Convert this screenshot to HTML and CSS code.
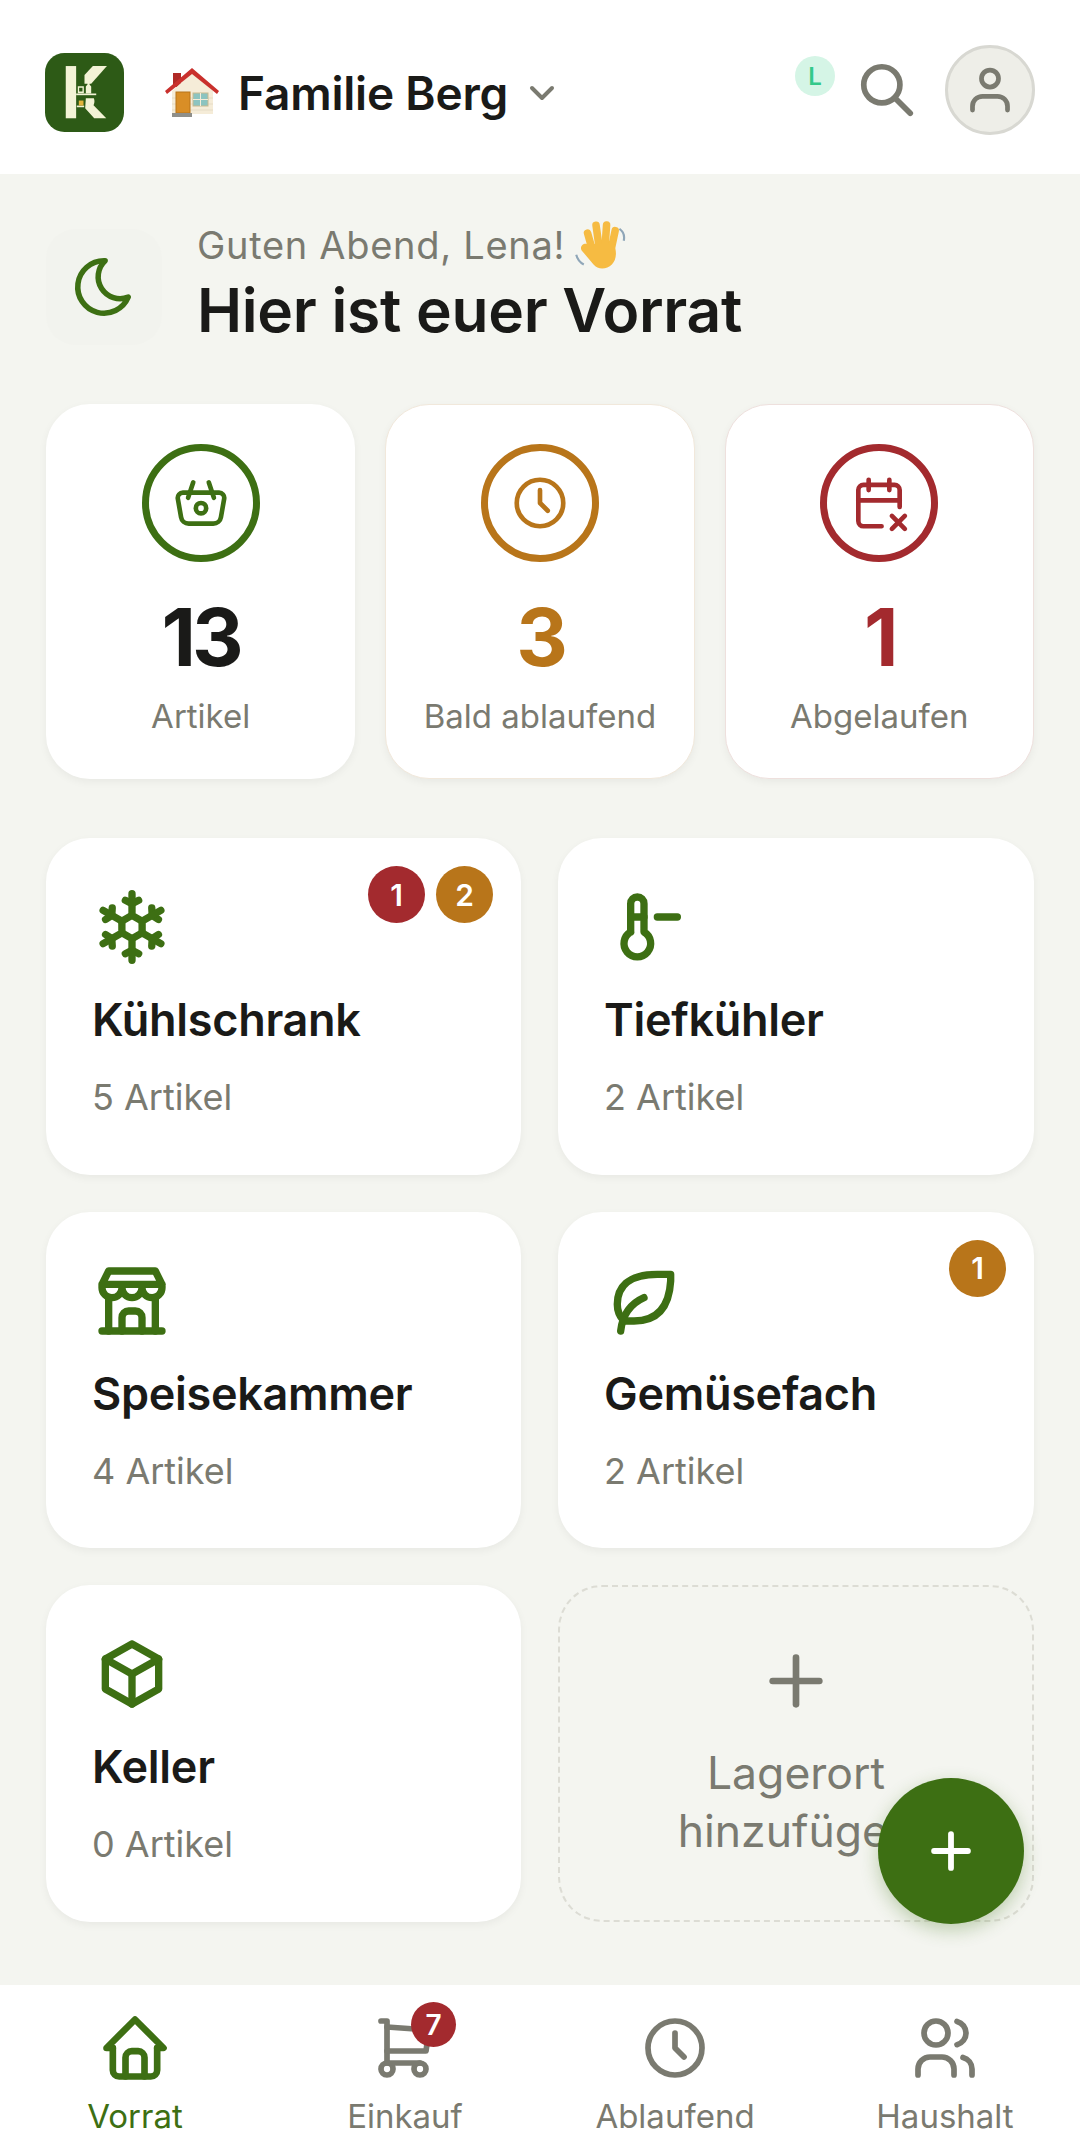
FILE: index.html
```html
<!DOCTYPE html>
<html lang="de">
<head>
  <meta charset="UTF-8" />
  <meta name="viewport" content="width=device-width, initial-scale=1.0"/>
  <title>Familie Berg - Vorrat</title>
  <link rel="stylesheet" href="styles.css">
</head>
<body>
  <div class="app">
    <header class="topbar">
      <svg class="logo" viewBox="0 0 236 236">
        <rect width="236" height="236" rx="58" fill="#2d5a16"/>
        <g fill="#f3f3d6">
          <rect x="62" y="39" width="31" height="156"/>
          <polygon points="143,39 185,39 138,92 118,92 118,66"/>
          <rect x="93" y="121" width="60" height="5"/>
          <path d="M122 121v-21l5-6v-7h6v7l5 6v21z"/>
          <path d="M98 99h18v21h-18z M102 104v11h10v-11z" fill-rule="evenodd"/>
          <path d="M122 135h24c3 8 2 14-1 21l38 39h-36l-27-30z"/>
          <rect x="95" y="157" width="22" height="5"/>
        </g>
        <rect x="101" y="142" width="14" height="15" fill="#e2b33c"/>
      </svg>
      <svg class="house" viewBox="0 0 54 49">
        <rect x="8" y="5" width="8" height="14" fill="#b02a26"/>
        <path d="M7 23L27 5l21 18v23H7z" fill="#f5ecd8"/>
        <path d="M7 30h41M7 36h41M7 42h41" stroke="#e6dcc6" stroke-width="1"/>
        <path d="M0 23L27 0l27 23-2 3L27 6 2 26z" fill="#c9302c"/>
        <rect x="11" y="24" width="14" height="21" fill="#d98e26" stroke="#b8751a" stroke-width="1"/>
        <rect x="28" y="25" width="15" height="13" fill="#8cc4c0" stroke="#c9b98f" stroke-width="1"/>
        <path d="M35.500 25v13M28 31.500h15" stroke="#f5ecd8" stroke-width="1"/>
        <rect x="7" y="45" width="20" height="4" fill="#8f8f8a"/>
      </svg>
      <span class="family">Familie Berg</span>
      <svg class="icon chevron" viewBox="0 0 24 24"><path d="M6 9l6 6l6 -6"/></svg>
      <div class="topbar-right">
        <span class="presence">L</span>
        <svg class="icon search" viewBox="0 0 24 24"><path d="M3 10a7 7 0 1 0 14 0a7 7 0 1 0 -14 0"/><path d="M21 21l-6 -6"/></svg>
        <div class="avatar">
          <svg class="icon" viewBox="0 0 24 24"><path d="M8.600 7.400a3.400 3.400 0 1 0 6.800 0a3.400 3.400 0 0 0 -6.800 0"/><path d="M5 20v-1.500a4 4 0 0 1 4 -4h6a4 4 0 0 1 4 4v1.500"/></svg>
        </div>
      </div>
    </header>

    <main class="content">
      <section class="greeting">
        <div class="moon-tile">
          <svg class="icon" viewBox="0 0 24 24"><path d="M12 3c.132 0 .263 0 .393 0a7.500 7.500 0 0 0 7.920 12.446a9 9 0 1 1 -8.313 -12.454z"/></svg>
        </div>
        <div>
          <p class="hello">Guten Abend, Lena!
            <svg class="wave" viewBox="0 0 50 46">
              <g fill="#f6bb42">
                <rect x="12" y="8" width="7" height="22" rx="3.500" transform="rotate(-16 16 19)"/>
                <rect x="19" y="1" width="7" height="24" rx="3.500" transform="rotate(-8 23 13)"/>
                <rect x="27" y="1" width="7" height="24" rx="3.500" transform="rotate(4 30 13)"/>
                <rect x="34" y="6" width="7" height="22" rx="3.500" transform="rotate(12 37 17)"/>
                <path d="M13 22h25c3 8 2 15-2 19-5 5-13 5-17 0l-11-13c-2-3 1-7 5-6z"/>
              </g>
              <path d="M43 8c3 2 5 6 4 11M3 32c1 4 3 7 7 9" fill="none" stroke="#8fa6b8" stroke-width="2"/>
            </svg>
          </p>
          <h1 class="title">Hier ist euer Vorrat</h1>
        </div>
      </section>

      <section class="stats">
        <div class="stat stat-green">
          <div class="stat-ring">
            <svg class="icon" viewBox="0 0 24 24"><path d="M10 14a2 2 0 1 0 4 0a2 2 0 0 0 -4 0"/><path d="M5.001 8h13.999a2 2 0 0 1 1.977 2.304l-1.255 7.152a3 3 0 0 1 -2.966 2.544h-9.512a3 3 0 0 1 -2.965 -2.544l-1.255 -7.152a2 2 0 0 1 1.977 -2.304z"/><path d="M17 10l-2 -6"/><path d="M7 10l2 -6"/></svg>
          </div>
          <div class="stat-num">13</div>
          <div class="stat-label">Artikel</div>
        </div>
        <div class="stat stat-orange">
          <div class="stat-ring">
            <svg class="icon" viewBox="0 0 24 24"><path d="M3 12a9 9 0 1 0 18 0a9 9 0 0 0 -18 0"/><path d="M12 7v5l3 3"/></svg>
          </div>
          <div class="stat-num">3</div>
          <div class="stat-label">Bald ablaufend</div>
        </div>
        <div class="stat stat-red">
          <div class="stat-ring">
            <svg class="icon" viewBox="0 0 24 24"><path d="M13 21h-7a2 2 0 0 1 -2 -2v-12a2 2 0 0 1 2 -2h12a2 2 0 0 1 2 2v6.500"/><path d="M16 3v4"/><path d="M8 3v4"/><path d="M4 11h16"/><path d="M22 22l-5 -5"/><path d="M17 22l5 -5"/></svg>
          </div>
          <div class="stat-num">1</div>
          <div class="stat-label">Abgelaufen</div>
        </div>
      </section>

      <section class="places">
        <div class="place">
          <div class="badges">
            <span class="badge badge-red">1</span>
            <span class="badge badge-orange">2</span>
          </div>
          <svg class="icon" viewBox="0 0 24 24"><path d="M10 4l2 1l2 -1"/><path d="M12 2v6.500l3 1.720"/><path d="M17.928 6.268l.134 2.232l1.866 1.232"/><path d="M20.660 7l-5.629 3.250l.01 3.458"/><path d="M19.928 14.268l-1.866 1.232l-.134 2.232"/><path d="M20.660 17l-5.629 -3.250l-2.990 1.738"/><path d="M14 20l-2 -1l-2 1"/><path d="M12 22v-6.500l-3 -1.720"/><path d="M6.072 17.732l-.134 -2.232l-1.866 -1.232"/><path d="M3.340 17l5.629 -3.250l-.01 -3.458"/><path d="M4.072 9.732l1.866 -1.232l.134 -2.232"/><path d="M3.340 7l5.629 3.250l2.990 -1.738"/></svg>
          <h2 class="place-name">Kühlschrank</h2>
          <p class="place-count">5 Artikel</p>
        </div>
        <div class="place">
          <svg class="icon" viewBox="0 0 24 24"><path d="M8 13.500a4 4 0 1 0 4 0v-8.500a2 2 0 1 0 -4 0v8.500"/><path d="M8 9l4 0"/><path d="M16 9l6 0"/></svg>
          <h2 class="place-name">Tiefkühler</h2>
          <p class="place-count">2 Artikel</p>
        </div>
        <div class="place">
          <svg class="icon" viewBox="0 0 24 24"><path d="M3 21l18 0"/><path d="M3 7v1a3 3 0 0 0 6 0v-1m0 1a3 3 0 0 0 6 0v-1m0 1a3 3 0 0 0 6 0v-1h-18l2 -4h14l2 4"/><path d="M5 21l0 -10.150"/><path d="M19 21l0 -10.150"/><path d="M9 21v-4a2 2 0 0 1 2 -2h2a2 2 0 0 1 2 2v4"/></svg>
          <h2 class="place-name">Speisekammer</h2>
          <p class="place-count">4 Artikel</p>
        </div>
        <div class="place">
          <div class="badges">
            <span class="badge badge-orange">1</span>
          </div>
          <svg class="icon" viewBox="0 0 24 24"><path d="M5 21c.5 -4.500 2.500 -8 7 -10"/><path d="M9 18c6.218 0 10.500 -3.288 11 -12v-2h-4.014c-9 0 -11.986 4 -12 9c0 1 0 3 2 5h3z"/></svg>
          <h2 class="place-name">Gemüsefach</h2>
          <p class="place-count">2 Artikel</p>
        </div>
        <div class="place">
          <svg class="icon" viewBox="0 0 24 24"><path d="M12 3l8 4.500l0 9l-8 4.500l-8 -4.500l0 -9l8 -4.500"/><path d="M12 12l8 -4.500"/><path d="M12 12l0 9"/><path d="M12 12l-8 -4.500"/></svg>
          <h2 class="place-name">Keller</h2>
          <p class="place-count">0 Artikel</p>
        </div>
        <div class="place-add">
          <svg class="icon" viewBox="0 0 24 24"><path d="M12 5l0 14"/><path d="M5 12l14 0"/></svg>
          <span>Lagerort hinzufügen</span>
        </div>
      </section>

      <button class="fab">
        <svg class="icon" viewBox="0 0 24 24"><path d="M12 5l0 14"/><path d="M5 12l14 0"/></svg>
      </button>
    </main>

    <nav class="tabbar">
      <div class="tab tab-active">
        <svg class="icon" viewBox="0 0 24 24"><path d="M5 12l-2 0l9 -9l9 9l-2 0"/><path d="M5 12v7a2 2 0 0 0 2 2h10a2 2 0 0 0 2 -2v-7"/><path d="M9 21v-6a2 2 0 0 1 2 -2h2a2 2 0 0 1 2 2v6"/></svg>
        <span>Vorrat</span>
      </div>
      <div class="tab">
        <div class="tab-icon">
          <svg class="icon" viewBox="0 0 24 24"><path d="M4 19a2 2 0 1 0 4 0a2 2 0 1 0 -4 0"/><path d="M15 19a2 2 0 1 0 4 0a2 2 0 1 0 -4 0"/><path d="M17 17h-11v-14h-2"/><path d="M6 5l14 1l-1 7h-13"/></svg>
          <span class="tab-badge">7</span>
        </div>
        <span>Einkauf</span>
      </div>
      <div class="tab">
        <svg class="icon" viewBox="0 0 24 24"><path d="M3 12a9 9 0 1 0 18 0a9 9 0 0 0 -18 0"/><path d="M12 7v5l3 3"/></svg>
        <span>Ablaufend</span>
      </div>
      <div class="tab">
        <svg class="icon" viewBox="0 0 24 24"><path d="M5 7a4 4 0 1 0 8 0a4 4 0 1 0 -8 0"/><path d="M3 21v-2a4 4 0 0 1 4 -4h4a4 4 0 0 1 4 4v2"/><path d="M16 3.130a4 4 0 0 1 0 7.750"/><path d="M21 21v-2a4 4 0 0 0 -3 -3.850"/></svg>
        <span>Haushalt</span>
      </div>
    </nav>
  </div>
</body>
</html>
```

FILE: styles.css
```css
* {
  box-sizing: border-box;
}

body {
  margin: 0;
  font-family: Inter, "Noto Sans", sans-serif;
  background: #f4f5f0;
  color: #1a1a18;
}

h1, h2, p {
  margin: 0;
}

.app {
  width: 1080px;
  height: 2148px;
  display: flex;
  flex-direction: column;
  overflow: hidden;
}

.icon {
  display: block;
  fill: none;
  stroke: currentColor;
  stroke-width: 2;
  stroke-linecap: round;
  stroke-linejoin: round;
}

/* top bar */
.topbar {
  height: 174px;
  flex: none;
  display: flex;
  align-items: center;
  padding: 0 45px;
  background: white;
}

.logo {
  width: 79px;
  height: 79px;
  margin-top: 11px;
}

.house {
  width: 54px;
  height: 49px;
  margin-left: 41px;
  margin-top: 11px;
}

.family {
  margin-left: 19px;
  font-size: 46px;
  font-weight: 600;
  letter-spacing: -0.2px;
  margin-top: 11px;
}

.chevron {
  width: 40px;
  height: 40px;
  margin-left: 14px;
  margin-top: 11px;
  color: #7a7a70;
  stroke-width: 2.400;
}

.topbar-right {
  margin-left: auto;
  display: flex;
  align-items: center;
  margin-top: 6px;
}

.presence {
  width: 40px;
  height: 40px;
  border-radius: 50%;
  background: #d5f5e6;
  color: #34c98a;
  font-size: 24px;
  font-weight: 600;
  display: flex;
  align-items: center;
  justify-content: center;
  align-self: flex-start;
  margin-top: 11px;
}

.search {
  width: 62px;
  height: 62px;
  margin-left: 21px;
  color: #7a7a70;
  stroke-width: 2.200;
}

.avatar {
  width: 90px;
  height: 90px;
  margin-left: 27px;
  border-radius: 50%;
  background: #eeeee8;
  border: 3px solid #d8d8d2;
  color: #7a7a70;
  display: flex;
  align-items: center;
  justify-content: center;
}

.avatar .icon {
  width: 60px;
  height: 60px;
  stroke-width: 1.900;
}

/* page body */
.content {
  flex: 1;
  position: relative;
  padding: 54px 46px 0;
}

.greeting {
  display: flex;
  align-items: center;
  gap: 35px;
  height: 117px;
}

.moon-tile {
  width: 116px;
  height: 116px;
  flex: none;
  border-radius: 30px;
  background: #f2f3ee;
  color: #3d6f13;
  display: flex;
  align-items: center;
  justify-content: center;
}

.moon-tile .icon {
  width: 70px;
  height: 70px;
  stroke-width: 1.900;
}

.hello {
  display: flex;
  align-items: center;
  gap: 10px;
  font-size: 38px;
  letter-spacing: 0.7px;
  line-height: 44px;
  color: #7a7a70;
  margin-top: -6px;
  margin-bottom: 6px;
}

.wave {
  width: 50px;
  height: 46px;
  transform: scale(1.080);
}

.title {
  font-size: 60.500px;
  line-height: 72px;
  font-weight: 600;
  letter-spacing: -0.3px;
}

.stats {
  display: grid;
  grid-template-columns: repeat(3, 1fr);
  gap: 30px;
  margin-top: 59px;
}

.stat {
  height: 375px;
  background: white;
  border: 1px solid transparent;
  border-radius: 44px;
  box-shadow: 0 3px 8px rgba(0, 0, 0, 0.05);
  display: flex;
  flex-direction: column;
  align-items: center;
  padding-top: 39px;
}

.stat-ring {
  width: 118px;
  height: 118px;
  border-radius: 50%;
  border: 7px solid currentColor;
  display: flex;
  align-items: center;
  justify-content: center;
}

.stat-ring .icon {
  width: 62px;
  height: 62px;
  stroke-width: 1.800;
}

.stat-num {
  margin-top: 25px;
  font-size: 80px;
  line-height: 100px;
  font-weight: 700;
  letter-spacing: -4px;
}

.stat-label {
  margin-top: 9px;
  font-size: 33px;
  line-height: 40px;
  color: #7a7a70;
}

.stat-green {
  color: #3d6f13;
}

.stat-green .stat-num {
  color: #1a1a18;
}

.stat-orange {
  color: #b8751a;
  border-color: #f1e8db;
}

.stat-red {
  color: #a32a2e;
  border-color: #eee0dd;
}

.places {
  display: grid;
  grid-template-columns: 475px 476px;
  grid-auto-rows: 336.500px;
  gap: 37px;
  margin-top: 59px;
}

.place {
  position: relative;
  background: white;
  border-radius: 44px;
  box-shadow: 0 3px 8px rgba(0, 0, 0, 0.05);
  padding: 49px 46px 0;
}

.place > .icon {
  width: 80px;
  height: 80px;
  color: #3d6f13;
  stroke-width: 2.200;
}

.place-name {
  margin-top: 25px;
  font-size: 45px;
  line-height: 56px;
  font-weight: 600;
  letter-spacing: -0.3px;
}

.place-count {
  margin-top: 27px;
  font-size: 36px;
  line-height: 44px;
  color: #7a7a70;
}

.badges {
  position: absolute;
  top: 28px;
  right: 28px;
  display: flex;
  gap: 11px;
}

.badge {
  width: 57px;
  height: 57px;
  border-radius: 50%;
  color: white;
  font-size: 30px;
  font-weight: 600;
  display: flex;
  align-items: center;
  justify-content: center;
}

.badge-red {
  background: #a32a2e;
}

.badge-orange {
  background: #b8751a;
}

.place-add {
  border: 2px dashed #dcdcd4;
  border-radius: 44px;
  color: #7a7a70;
  font-size: 44.500px;
  line-height: 58px;
  text-align: center;
  padding: 54px 60px 0;
  display: flex;
  flex-direction: column;
  align-items: center;
}

.place-add .icon {
  width: 80px;
  height: 80px;
  margin-bottom: 23px;
}

.fab {
  position: absolute;
  right: 56px;
  bottom: 61px;
  width: 146px;
  height: 146px;
  border: none;
  border-radius: 50%;
  background: #3d6f13;
  color: white;
  box-shadow: 0 6px 18px rgba(61, 111, 19, 0.3);
  display: flex;
  align-items: center;
  justify-content: center;
}

.fab .icon {
  width: 58px;
  height: 58px;
  stroke-width: 2.400;
}

/* bottom nav */
.tabbar {
  height: 163px;
  flex: none;
  background: white;
  display: grid;
  grid-template-columns: repeat(4, 1fr);
  padding-top: 27px;
}

.tab {
  display: flex;
  flex-direction: column;
  align-items: center;
  color: #7a7a70;
  font-size: 33px;
  line-height: 40px;
}

.tab .icon {
  width: 72px;
  height: 72px;
  stroke-width: 1.900;
}

.tab > span {
  margin-top: 12px;
}

.tab-active {
  color: #3d6f13;
}

.tab-active .icon {
  width: 76px;
  height: 76px;
  margin: -2px 0;
  stroke-width: 2.100;
}

.tab-icon {
  position: relative;
}

.tab-badge {
  position: absolute;
  top: -10px;
  right: -15px;
  width: 45px;
  height: 45px;
  border-radius: 50%;
  background: #a32a2e;
  color: white;
  font-size: 28px;
  font-weight: 600;
  display: flex;
  align-items: center;
  justify-content: center;
}
```
